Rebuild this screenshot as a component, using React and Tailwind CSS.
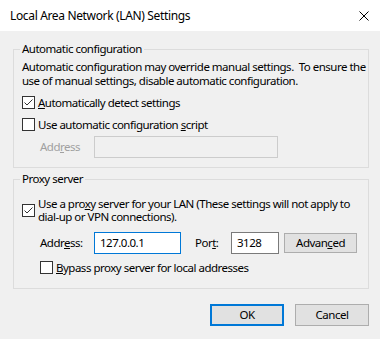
import React from 'react'

const font = { fontFamily: '"Noto Sans", "Liberation Sans", sans-serif' }

function CheckBox({ checked = false }) {
  return (
    <span className="w-[13px] h-[13px] shrink-0 border border-[#333333] bg-white flex items-center justify-center">
      {checked && (
        <svg width="11" height="11" viewBox="0 0 11 11">
          <polyline points="1.5,5.5 4,8 9.5,2.5" fill="none" stroke="#333333" strokeWidth="1" />
        </svg>
      )}
    </span>
  )
}

function GroupBox({ title, className = '', children }) {
  return (
    <fieldset className={`border border-[#dcdcdc] w-[356px] ${className}`}>
      <legend className="ml-[6px] px-[2px] leading-[16px]">{title}</legend>
      {children}
    </fieldset>
  )
}

export default function App() {
  return (
    <div
      className="w-[380px] h-[339px] bg-[#f0f0f0] text-[11.5px] tracking-[-0.5px] text-black flex flex-col"
      style={font}
    >
      {/* Title bar */}
      <div className="h-[31px] bg-white flex items-center justify-between pl-[10px] pr-[11px] shrink-0">
        <span className="text-[12px] tracking-[-0.35px]">Local Area Network (LAN) Settings</span>
        <svg width="10" height="10" viewBox="0 0 10 10">
          <path d="M0.5 0.5 L9.5 9.5 M9.5 0.5 L0.5 9.5" stroke="#000" strokeWidth="1" />
        </svg>
      </div>

      <div className="pl-[13px] flex flex-col">
        {/* Automatic configuration */}
        <GroupBox title="Automatic configuration" className="mt-[10px] pb-[9px]">
          <p className="ml-[8px] mt-[3px] leading-[14px] whitespace-nowrap">
            Automatic configuration may override manual settings.{'\u00a0'} To ensure the
            <br />
            use of manual settings, disable automatic configuration.
          </p>
          <label className="ml-[8px] mt-[7px] h-[15px] flex items-center gap-[3px]">
            <CheckBox checked />
            <span>
              <u>A</u>utomatically detect settings
            </span>
          </label>
          <label className="ml-[8px] mt-[7px] h-[15px] flex items-center gap-[3px]">
            <CheckBox />
            <span>
              Use automatic configuration <u>s</u>cript
            </span>
          </label>
          <div className="ml-[26px] mt-[4px] flex items-center">
            <span className="w-[54px] text-[#a0a0a0]">
              Add<u>r</u>ess
            </span>
            <div className="w-[184px] h-[22px] border border-[#cccccc] bg-[#f0f0f0]" />
          </div>
        </GroupBox>

        {/* Proxy server */}
        <GroupBox title="Proxy server" className="mt-[3px] pb-[13px]">
          <label className="ml-[8px] mt-[10px] flex items-center gap-[3px]">
            <CheckBox checked />
            <span className="leading-[13px] whitespace-nowrap">
              Use a pro<u>x</u>y server for your LAN (These settings will not apply to
              <br />
              dial-up or VPN connections).
            </span>
          </label>
          <div className="ml-[26px] mt-[9px] flex items-center">
            <span className="w-[54px]">
              Addr<u>e</u>ss:
            </span>
            <div className="w-[87px] h-[22px] border border-[#0078d7] bg-white flex items-center pl-[5px]">
              127.0.0.1
            </div>
            <span className="w-[36px] ml-[14px]">
              Por<u>t</u>:
            </span>
            <div className="w-[48px] h-[22px] border border-[#7a7a7a] bg-white flex items-center pl-[5px]">
              3128
            </div>
            <button className="ml-[5px] w-[73px] h-[20px] border border-[#adadad] bg-[#e1e1e1] flex items-center justify-center">
              <span>
                Advan<u>c</u>ed
              </span>
            </button>
          </div>
          <label className="ml-[26px] mt-[6px] h-[15px] flex items-center gap-[3px]">
            <CheckBox />
            <span>
              <u>B</u>ypass proxy server for local addresses
            </span>
          </label>
        </GroupBox>

        {/* Buttons */}
        <div className="w-[356px] mt-[15px] flex justify-end gap-[11px]">
          <button className="w-[74px] h-[22px] border-2 border-[#0078d7] bg-[#e1e1e1] flex items-center justify-center">
            OK
          </button>
          <button className="w-[74px] h-[22px] border border-[#adadad] bg-[#e1e1e1] flex items-center justify-center">
            Cancel
          </button>
        </div>
      </div>
    </div>
  )
}
